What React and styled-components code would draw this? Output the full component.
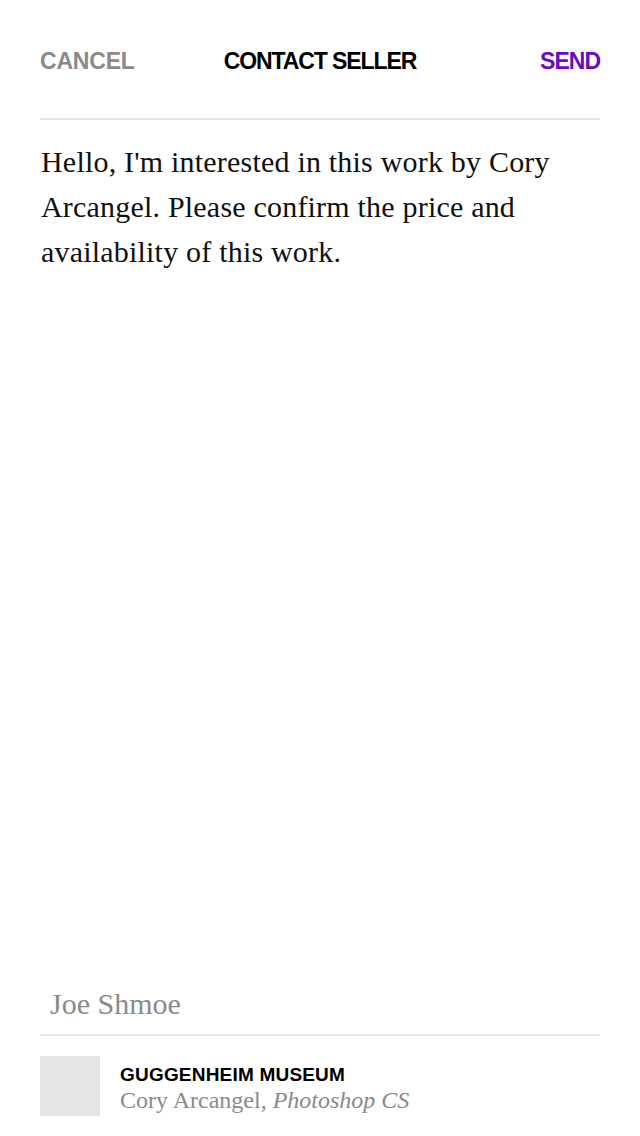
import React from "react";
import styled, { createGlobalStyle } from "styled-components";

const GlobalStyle = createGlobalStyle`
  html, body { margin: 0; padding: 0; background: #fff; }
  * { box-sizing: border-box; }
`;

const Page = styled.div`
  display: flex;
  flex-direction: column;
  height: 1136px;
  padding: 0 40px 20px;
  background: #fff;
`;

const Header = styled.header`
  display: grid;
  grid-template-columns: 1fr auto 1fr;
  align-items: start;
  height: 120px;
  padding-top: 50px;
  border-bottom: 2px solid #e5e5e5;
`;

const HeaderButton = styled.button`
  font-family: "Liberation Sans", Arial, sans-serif;
  font-weight: 700;
  font-size: 23px;
  line-height: 23px;
  letter-spacing: ${(p) => p.$spacing};
  text-transform: uppercase;
  background: none;
  border: 0;
  padding: 0;
  color: ${(p) => p.$color};
  justify-self: ${(p) => p.$align};
  cursor: pointer;
`;

const Title = styled.h1`
  margin: 0;
  font-family: "Liberation Sans", Arial, sans-serif;
  font-weight: 700;
  font-size: 23px;
  line-height: 23px;
  letter-spacing: -1.1px;
  color: #000;
`;

const Message = styled.p`
  flex: 1;
  margin: 0;
  padding: 19px 0 0 1px;
  font-family: "Liberation Serif", "Times New Roman", serif;
  font-size: 30px;
  line-height: 45px;
  letter-spacing: 0.2px;
  color: #111;
`;

const NameField = styled.div`
  padding: 0 10px 10px;
  font-family: "Liberation Serif", "Times New Roman", serif;
  font-size: 30px;
  line-height: 40px;
  color: #8a8a8a;
  border-bottom: 2px solid #e5e5e5;
`;

const ArtworkRow = styled.div`
  display: flex;
  gap: 20px;
  padding-top: 20px;
`;

const Thumb = styled.div`
  width: 60px;
  height: 60px;
  flex: none;
  background: #e5e5e5;
`;

const ArtworkInfo = styled.div`
  display: flex;
  flex-direction: column;
  padding-top: 7px;
`;

const Partner = styled.div`
  font-family: "Liberation Sans", Arial, sans-serif;
  font-weight: 700;
  font-size: 19px;
  line-height: 24px;
  letter-spacing: 0.2px;
  color: #000;
`;

const ArtworkTitle = styled.div`
  font-family: "Liberation Serif", "Times New Roman", serif;
  font-size: 24px;
  line-height: 27px;
  color: #8a8a8a;
  white-space: nowrap;

  em {
    font-style: italic;
  }
`;

export default function App() {
  return (
    <>
      <GlobalStyle />
      <Page>
        <Header>
          <HeaderButton $color="#8a8a8a" $align="start" $spacing="-0.2px">
            Cancel
          </HeaderButton>
          <Title>CONTACT SELLER</Title>
          <HeaderButton $color="#6a0bc1" $align="end" $spacing="-1px">
            Send
          </HeaderButton>
        </Header>
        <Message>
          Hello, I'm interested in this work by Cory Arcangel. Please confirm
          the price and availability of this work.
        </Message>
        <NameField>Joe Shmoe</NameField>
        <ArtworkRow>
          <Thumb />
          <ArtworkInfo>
            <Partner>GUGGENHEIM MUSEUM</Partner>
            <ArtworkTitle>
              Cory Arcangel, <em>Photoshop CS</em>
            </ArtworkTitle>
          </ArtworkInfo>
        </ArtworkRow>
      </Page>
    </>
  );
}
